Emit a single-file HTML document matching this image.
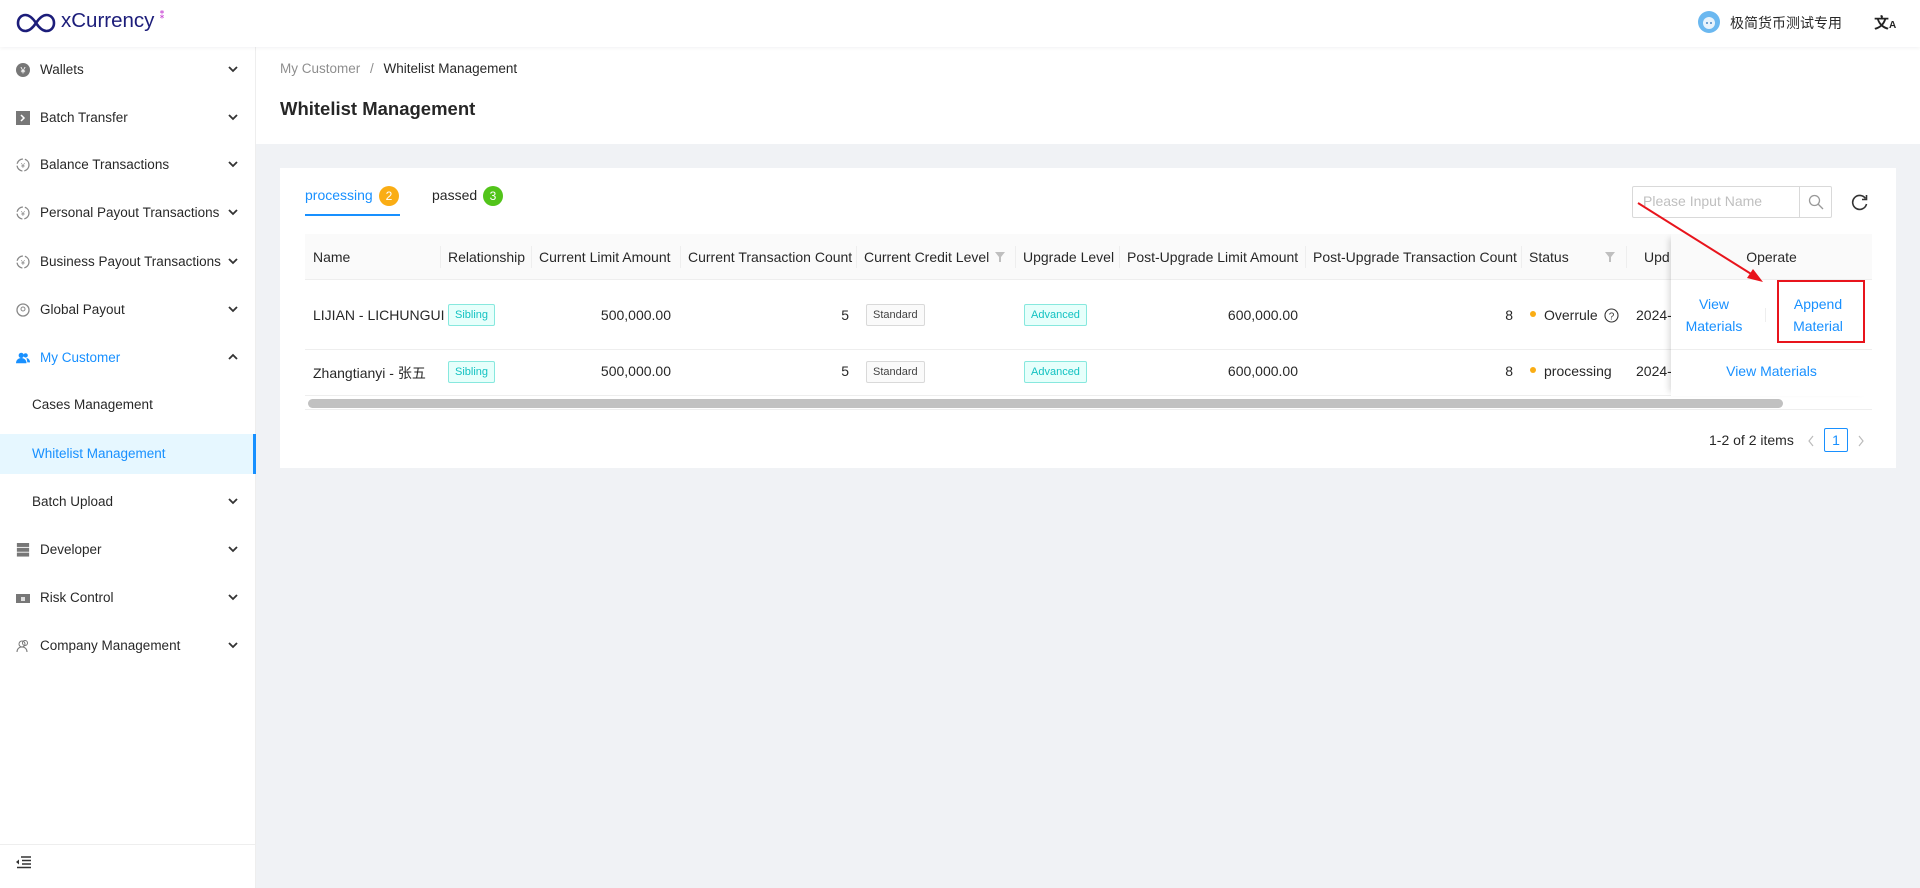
<!DOCTYPE html>
<html><head><meta charset="utf-8"><style>
*{margin:0;padding:0;box-sizing:border-box}
body{width:1920px;height:888px;overflow:hidden;background:#f0f2f5;font-family:"Liberation Sans","Noto Sans CJK SC",sans-serif;font-size:14px;color:rgba(0,0,0,.85);position:relative}
.a{position:absolute;white-space:nowrap}
#hdr{left:0;top:0;width:1920px;height:47px;background:#fff;box-shadow:0 1px 4px rgba(0,21,41,.06);z-index:2}
#side{left:0;top:47px;width:256px;height:841px;background:#fff;border-right:1px solid #eee}
.mi{position:absolute;left:0;width:256px;height:40px;line-height:40px;font-size:13.5px;color:rgba(0,0,0,.85)}
.mi .t{position:absolute;left:40px}
.mi .ic{position:absolute;left:16px;top:13px;width:14px;height:14px}
.mi .ch{position:absolute;left:228px;top:14px;width:10px;height:10px}
.sub .t{left:32px}
.th{position:absolute;top:0;height:46px;line-height:46px;padding-left:8px;font-size:14px;color:rgba(0,0,0,.85)}
.sep{position:absolute;top:12px;width:1px;height:22px;background:#eee}
.tag{position:absolute;height:22px;line-height:20px;font-size:11px;padding:0 6px;border:1px solid;border-radius:2px}
.cy{background:#e6fffb;border-color:#87e8de;color:#13c2c2}
.gr{background:#fafafa;border-color:#d9d9d9;color:rgba(0,0,0,.75)}
.r{text-align:right}
.link{color:#1890ff}
</style></head><body>
<div id="hdr" class="a">
 <svg class="a" style="left:15px;top:12px" width="42" height="22" viewBox="0 0 42 22"><path d="M21 11C17 5 14 3 10.5 3 6 3 3 6.6 3 11s3 8 7.5 8C14 19 17 17 21 11s7-8 10.5-8C36 3 39 6.6 39 11s-3 8-7.5 8C28 19 25 17 21 11z" fill="none" stroke="#1c1d7a" stroke-width="2.6"/></svg>
 <div class="a" style="left:61px;top:9px;font-size:20.5px;color:#1c1d7a">xCurrency</div>
 <div class="a" style="left:157px;top:6px;font-size:10px;color:#c43ad0;font-weight:bold">⁑</div>
 <svg class="a" style="left:1697px;top:10px" width="24" height="24"><circle cx="12" cy="12" r="11" fill="#6bb8f0"/><circle cx="12" cy="13" r="6" fill="#e8f3fc"/><circle cx="10" cy="13" r="1" fill="#4a8ac8"/><circle cx="14" cy="13" r="1" fill="#4a8ac8"/></svg>
 <div class="a" style="left:1730px;top:13px;font-size:14px;color:rgba(0,0,0,.85)">极简货币测试专用</div>
 <div class="a" style="left:1874px;top:12px;font-size:15px;color:#222;font-weight:bold">文<span style="font-size:10px">A</span></div>
</div>
<div id="side" class="a">
</div>
<div class="a" style="left:0;top:0;width:256px;height:888px;z-index:1">
 <div class="mi" style="top:50px"><svg class="ic" viewBox="0 0 14 14"><circle cx="7" cy="7" r="7" fill="#777"/><text x="7" y="10.5" font-size="9" fill="#fff" text-anchor="middle" font-family="Liberation Sans">¥</text></svg><span class="t">Wallets</span><svg class="ch" viewBox="0 0 10 10"><path d="M1 3l4 4 4-4" fill="none" stroke="#333" stroke-width="1.8"/></svg></div>
 <div class="mi" style="top:98px"><svg class="ic" viewBox="0 0 14 14"><rect width="14" height="14" fill="#777"/><path d="M5 4l3 3-3 3" fill="none" stroke="#fff" stroke-width="1.5"/></svg><span class="t">Batch Transfer</span><svg class="ch" viewBox="0 0 10 10"><path d="M1 3l4 4 4-4" fill="none" stroke="#333" stroke-width="1.8"/></svg></div>
 <div class="mi" style="top:145px"><svg class="ic" viewBox="0 0 14 14"><circle cx="7" cy="7" r="6" fill="none" stroke="#888" stroke-width="1.3" stroke-dasharray="8 2"/><text x="7" y="10" font-size="7" fill="#888" text-anchor="middle">¥</text></svg><span class="t">Balance Transactions</span><svg class="ch" viewBox="0 0 10 10"><path d="M1 3l4 4 4-4" fill="none" stroke="#333" stroke-width="1.8"/></svg></div>
 <div class="mi" style="top:193px"><svg class="ic" viewBox="0 0 14 14"><circle cx="7" cy="7" r="6" fill="none" stroke="#888" stroke-width="1.3" stroke-dasharray="8 2"/><text x="7" y="10" font-size="7" fill="#888" text-anchor="middle">¥</text></svg><span class="t">Personal Payout Transactions</span><svg class="ch" viewBox="0 0 10 10"><path d="M1 3l4 4 4-4" fill="none" stroke="#333" stroke-width="1.8"/></svg></div>
 <div class="mi" style="top:242px"><svg class="ic" viewBox="0 0 14 14"><circle cx="7" cy="7" r="6" fill="none" stroke="#888" stroke-width="1.3" stroke-dasharray="8 2"/><text x="7" y="10" font-size="7" fill="#888" text-anchor="middle">¥</text></svg><span class="t">Business Payout Transactions</span><svg class="ch" viewBox="0 0 10 10"><path d="M1 3l4 4 4-4" fill="none" stroke="#333" stroke-width="1.8"/></svg></div>
 <div class="mi" style="top:290px"><svg class="ic" viewBox="0 0 14 14"><circle cx="7" cy="7" r="6" fill="none" stroke="#888" stroke-width="1.3"/><circle cx="7" cy="6" r="2" fill="none" stroke="#888"/></svg><span class="t">Global Payout</span><svg class="ch" viewBox="0 0 10 10"><path d="M1 3l4 4 4-4" fill="none" stroke="#333" stroke-width="1.8"/></svg></div>
 <div class="mi" style="top:338px;color:#1890ff"><svg class="ic" viewBox="0 0 16 14"><circle cx="6" cy="4" r="3" fill="#1890ff"/><path d="M0 13c0-4 3-6 6-6s6 2 6 6z" fill="#1890ff"/><circle cx="11" cy="4" r="2.5" fill="#1890ff"/><path d="M12 7c2 0 4 2 4 5h-3z" fill="#1890ff"/></svg><span class="t">My Customer</span><svg class="ch" viewBox="0 0 10 10"><path d="M1 7l4-4 4 4" fill="none" stroke="#333" stroke-width="1.8"/></svg></div>
 <div class="mi sub" style="top:385px"><span class="t">Cases Management</span></div>
 <div class="mi sub" style="top:434px;background:#e6f7ff;color:#1890ff;border-right:3px solid #1890ff"><span class="t">Whitelist Management</span></div>
 <div class="mi sub" style="top:482px"><span class="t">Batch Upload</span><svg class="ch" viewBox="0 0 10 10"><path d="M1 3l4 4 4-4" fill="none" stroke="#333" stroke-width="1.8"/></svg></div>
 <div class="mi" style="top:530px"><svg class="ic" viewBox="0 0 14 16"><rect y="0" width="14" height="4.5" fill="#777"/><rect y="5.5" width="14" height="4.5" fill="#777"/><rect y="11" width="14" height="4.5" fill="#777"/></svg><span class="t">Developer</span><svg class="ch" viewBox="0 0 10 10"><path d="M1 3l4 4 4-4" fill="none" stroke="#333" stroke-width="1.8"/></svg></div>
 <div class="mi" style="top:578px"><svg class="ic" viewBox="0 0 14 14"><rect y="3" width="14" height="9" fill="#777"/><rect x="5" y="6" width="4" height="4" fill="#ddd"/></svg><span class="t">Risk Control</span><svg class="ch" viewBox="0 0 10 10"><path d="M1 3l4 4 4-4" fill="none" stroke="#333" stroke-width="1.8"/></svg></div>
 <div class="mi" style="top:626px"><svg class="ic" viewBox="0 0 14 14"><circle cx="6" cy="5" r="3" fill="none" stroke="#777"/><path d="M1 13c0-3 2-5 5-5s5 2 5 5" fill="none" stroke="#777"/><circle cx="9" cy="4" r="2.5" fill="none" stroke="#777"/></svg><span class="t">Company Management</span><svg class="ch" viewBox="0 0 10 10"><path d="M1 3l4 4 4-4" fill="none" stroke="#333" stroke-width="1.8"/></svg></div>
 <div class="a" style="left:0;top:844px;width:256px;height:1px;background:#eee"></div>
 <svg class="a" style="left:16px;top:855px" width="16" height="14"><path d="M5 2h10M6 5.5h9M6 9h9M1 12.5h14" stroke="#333" stroke-width="1.4"/><path d="M0 7l3-2.5v5z" fill="#333"/></svg>
</div>
<!-- page header -->
<div class="a" style="left:256px;top:47px;width:1664px;height:97px;background:#fff"></div>
<div class="a" style="left:280px;top:61px;font-size:13.5px;color:rgba(0,0,0,.45)">My Customer <span style="margin:0 6px">/</span> <span style="color:rgba(0,0,0,.85)">Whitelist Management</span></div>
<div class="a" style="left:280px;top:98px;font-size:18.5px;font-weight:bold;color:rgba(0,0,0,.85)">Whitelist Management</div>
<!-- card -->
<div class="a" style="left:280px;top:168px;width:1616px;height:300px;background:#fff"></div>
<div class="a" style="left:305px;top:187px;font-size:14px;color:#1890ff">processing</div>
<div class="a" style="left:379px;top:186px;width:20px;height:20px;border-radius:10px;background:#faad14;color:#fff;font-size:12px;text-align:center;line-height:20px">2</div>
<div class="a" style="left:305px;top:214px;width:95px;height:2px;background:#1890ff"></div>
<div class="a" style="left:432px;top:187px;font-size:14px">passed</div>
<div class="a" style="left:483px;top:186px;width:20px;height:20px;border-radius:10px;background:#52c41a;color:#fff;font-size:12px;text-align:center;line-height:20px">3</div>
<div class="a" style="left:1632px;top:186px;width:200px;height:32px;border:1px solid #d9d9d9;border-radius:2px"></div>
<div class="a" style="left:1643px;top:193px;font-size:14px;color:#bfbfbf">Please Input Name</div>
<div class="a" style="left:1799px;top:186px;width:1px;height:32px;background:#d9d9d9"></div>
<svg class="a" style="left:1808px;top:194px" width="16" height="16"><circle cx="6.5" cy="6.5" r="5" fill="none" stroke="#999" stroke-width="1.3"/><path d="M10 10l5 5" stroke="#999" stroke-width="1.3"/></svg>
<svg class="a" style="left:1851px;top:193px" width="18" height="18"><path d="M14.5 5.5A7 7 0 1 0 15.5 11" fill="none" stroke="#333" stroke-width="1.6"/><path d="M15.5 2v4.5H11" fill="none" stroke="#333" stroke-width="1.6"/></svg>
<!-- table -->
<div class="a" style="left:305px;top:234px;width:1567px;height:176px;overflow:hidden">
 <div class="a" style="left:0;top:0;width:1567px;height:46px;background:#fafafa;border-bottom:1px solid #eee"></div>
 <div class="th" style="left:0">Name</div><div class="sep" style="left:135px"></div>
 <div class="th" style="left:135px">Relationship</div><div class="sep" style="left:226px"></div>
 <div class="th" style="left:226px">Current Limit Amount</div><div class="sep" style="left:375px"></div>
 <div class="th" style="left:375px">Current Transaction Count</div><div class="sep" style="left:551px"></div>
 <div class="th" style="left:551px">Current Credit Level</div><div class="sep" style="left:710px"></div>
 <div class="th" style="left:710px">Upgrade Level</div><div class="sep" style="left:814px"></div>
 <div class="th" style="left:814px">Post-Upgrade Limit Amount</div><div class="sep" style="left:1000px"></div>
 <div class="th" style="left:1000px">Post-Upgrade Transaction Count</div><div class="sep" style="left:1216px"></div>
 <div class="th" style="left:1216px">Status</div><div class="sep" style="left:1321px"></div>
 <div class="th" style="left:1331px">Upd</div>
 <svg class="a" style="left:690px;top:18px" width="10" height="10"><path d="M0 0h10L6 5v5H4V5z" fill="#bfbfbf"/></svg>
 <svg class="a" style="left:1300px;top:18px" width="10" height="10"><path d="M0 0h10L6 5v5H4V5z" fill="#bfbfbf"/></svg>
 <div class="a" style="left:0;top:115px;width:1567px;height:1px;background:#eee"></div>
 <div class="a" style="left:0;top:161px;width:1567px;height:1px;background:#eee"></div>
 <!-- row1 -->
 <div class="a" style="left:8px;top:73px">LIJIAN - LICHUNGUI</div>
 <div class="tag cy" style="left:143px;top:70px">Sibling</div>
 <div class="a r" style="left:226px;top:73px;width:140px">500,000.00</div>
 <div class="a r" style="left:375px;top:73px;width:169px">5</div>
 <div class="tag gr" style="left:561px;top:70px">Standard</div>
 <div class="tag cy" style="left:719px;top:70px">Advanced</div>
 <div class="a r" style="left:814px;top:73px;width:179px">600,000.00</div>
 <div class="a r" style="left:1000px;top:73px;width:208px">8</div>
 <div class="a" style="left:1225px;top:77px;width:6px;height:6px;border-radius:3px;background:#faad14"></div>
 <div class="a" style="left:1239px;top:73px">Overrule</div>
 <svg class="a" style="left:1299px;top:74px" width="15" height="15"><circle cx="7.5" cy="7.5" r="6.5" fill="none" stroke="#333" stroke-width="1.1"/><text x="7.5" y="11.5" font-size="10" text-anchor="middle" fill="#333" font-family="Liberation Sans">?</text></svg>
 <div class="a" style="left:1331px;top:73px">2024-</div>
 <!-- row2 -->
 <div class="a" style="left:8px;top:129px">Zhangtianyi - 张五</div>
 <div class="tag cy" style="left:143px;top:127px">Sibling</div>
 <div class="a r" style="left:226px;top:129px;width:140px">500,000.00</div>
 <div class="a r" style="left:375px;top:129px;width:169px">5</div>
 <div class="tag gr" style="left:561px;top:127px">Standard</div>
 <div class="tag cy" style="left:719px;top:127px">Advanced</div>
 <div class="a r" style="left:814px;top:129px;width:179px">600,000.00</div>
 <div class="a r" style="left:1000px;top:129px;width:208px">8</div>
 <div class="a" style="left:1225px;top:133px;width:6px;height:6px;border-radius:3px;background:#faad14"></div>
 <div class="a" style="left:1239px;top:129px">processing</div>
 <div class="a" style="left:1331px;top:129px">2024-</div>
 <!-- fixed operate -->
 <div class="a" style="left:1366px;top:0;width:201px;height:162px;background:#fff;box-shadow:-6px 0 6px -4px rgba(0,0,0,.15)">
  <div class="a" style="left:0;top:0;width:201px;height:46px;background:#fafafa;border-bottom:1px solid #eee;text-align:center;line-height:46px">Operate</div>
  <div class="a link" style="left:0;top:59px;width:86px;text-align:center;white-space:normal;line-height:22px">View<br>Materials</div>
  <div class="a" style="left:94px;top:74px;width:1px;height:14px;background:#eee"></div>
  <div class="a link" style="left:104px;top:59px;width:86px;text-align:center;line-height:22px">Append<br>Material</div>
  <div class="a" style="left:0;top:115px;width:201px;height:1px;background:#eee"></div>
  <div class="a link" style="left:0;top:129px;width:201px;text-align:center">View Materials</div>
 </div>
 <div class="a" style="left:3px;top:165px;width:1475px;height:9px;border-radius:5px;background:#c1c1c1"></div>
 <div class="a" style="left:0;top:175px;width:1567px;height:1px;background:#eee"></div>
</div>
<!-- red annotation -->
<div class="a" style="left:1777px;top:280px;width:88px;height:63px;border:2px solid #e8141c"></div>
<svg class="a" style="left:1630px;top:195px" width="150" height="92"><path d="M8 8L126 82" stroke="#e8141c" stroke-width="2"/><path d="M133 87l-16-4 6-9z" fill="#e8141c"/></svg>
<!-- pagination -->
<div class="a" style="left:1709px;top:432px;font-size:14px">1-2 of 2 items</div>
<svg class="a" style="left:1806px;top:434px" width="10" height="14"><path d="M7 2L3 7l4 5" fill="none" stroke="#bbb" stroke-width="1.2"/></svg>
<div class="a" style="left:1824px;top:428px;width:24px;height:24px;border:1px solid #1890ff;border-radius:2px;color:#1890ff;text-align:center;line-height:22px">1</div>
<svg class="a" style="left:1856px;top:434px" width="10" height="14"><path d="M3 2l4 5-4 5" fill="none" stroke="#bbb" stroke-width="1.2"/></svg>
</body></html>
